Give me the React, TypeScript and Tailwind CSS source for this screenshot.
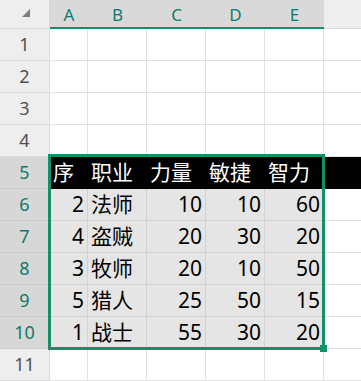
import React from "react";

const cols = ["A", "B", "C", "D", "E"];

// null = empty row, otherwise the five cell values of A..E
const rows: (null | (string | number)[])[] = [
  null,
  null,
  null,
  null,
  ["序", "职业", "力量", "敏捷", "智力"],
  [2, "法师", 10, 10, 60],
  [4, "盗贼", 20, 30, 20],
  [3, "牧师", 20, 10, 50],
  [5, "猎人", 25, 50, 15],
  [1, "战士", 55, 30, 20],
  null,
];

const cellFont = { fontFamily: '"Noto Sans", "Noto Sans CJK SC", sans-serif' };

export default function App() {
  return (
    <div
      className="relative w-[361px] h-[381px] overflow-hidden bg-white"
      style={cellFont}
    >
      <div className="grid grid-cols-[50px_38px_59px_59px_59px_59px_1fr]">
        {/* header row */}
        <div className="h-[29px] bg-[#eeeeee] border-r border-b border-[#d6d6d6] flex items-center justify-center">
          <svg width="8" height="8" viewBox="0 0 8 8" className="ml-[2px] mt-[-2px]">
            <polygon points="8,0 8,8 0,8" fill="#7f7f7f" />
          </svg>
        </div>
        {cols.map((c) => (
          <div
            key={c}
            className="h-[29px] pt-[3px] bg-[#d9d9d9] border-b-2 border-[#13906a] flex items-center justify-center text-[17px] text-[#0f7a6c]"
          >
            {c}
          </div>
        ))}
        <div className="h-[29px] bg-[#eeeeee] border-b border-[#dcdcdc]" />

        {rows.map((r, i) => {
          const n = i + 1;
          const selected = n >= 5 && n <= 10;
          const head = n === 5;
          return (
            <React.Fragment key={n}>
              <div
                className={`h-[32px] border-r border-b flex items-center justify-center text-[18px] ${
                  selected
                    ? "bg-[#d7d7d7] border-[#cccccc] text-[#0f7a6c]"
                    : "bg-[#eeeeee] border-[#dcdcdc] text-[#505050]"
                }`}
              >
                {n}
              </div>
              {cols.map((c, j) => {
                const v = r ? r[j] : "";
                const right = typeof v === "number";
                let cls = "bg-white border-[#e1e1e1] text-black";
                if (head) cls = "bg-black border-black text-white";
                else if (selected) cls = "bg-[#e5e5e5] border-[#d2d2d2] text-black";
                return (
                  <div
                    key={c}
                    className={`h-[32px] border-r border-b flex items-center text-[21px] leading-none px-[3px] ${cls} ${
                      right ? "justify-end" : "justify-start"
                    }`}
                  >
                    {v}
                  </div>
                );
              })}
              <div
                className={`h-[32px] border-b ${
                  head ? "bg-black border-black" : "bg-white border-[#e1e1e1]"
                }`}
              />
            </React.Fragment>
          );
        })}
      </div>

      {/* selection outline over A5:E10 */}
      <div className="absolute left-[48px] top-[154px] w-[277px] h-[196px] border-[3px] border-[#13906a] pointer-events-none" />
      <div className="absolute left-[320px] top-[345px] w-[7px] h-[7px] bg-[#13906a]" />
    </div>
  );
}
